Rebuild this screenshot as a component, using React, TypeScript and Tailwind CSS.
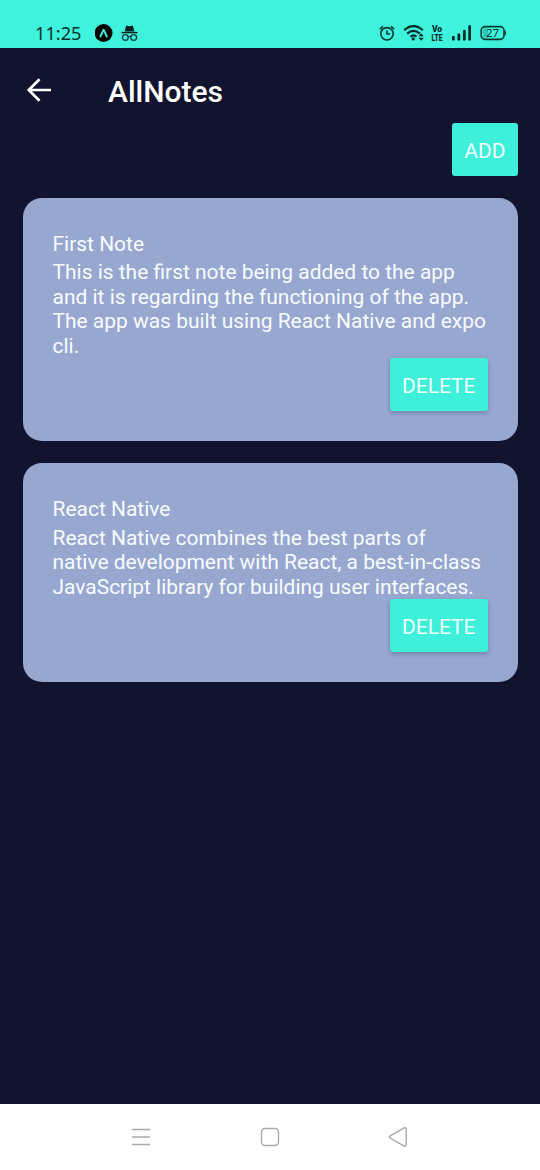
type Note = { title: string; lines: string[] };

const notes: Note[] = [
  {
    title: "First Note",
    lines: [
      "This is the first note being added to the app",
      "and it is regarding the functioning of the app.",
      "The app was built using React Native and expo",
      "cli.",
    ],
  },
  {
    title: "React Native",
    lines: [
      "React Native combines the best parts of",
      "native development with React, a best-in-class",
      "JavaScript library for building user interfaces.",
    ],
  },
];

function StatusBar() {
  return (
    <div className="flex h-12 items-start bg-[#3ef2dc] pt-[23px] pl-[35px] text-[#08302c]">
      <span className="h-5 w-[60px] font-['Noto_Sans',sans-serif] text-[18.2px] leading-5 whitespace-nowrap">11:25</span>
      <svg className="h-5 w-[18px]" viewBox="0 0 18 20">
        <circle cx="8.6" cy="10" r="8.9" fill="#000" />
        <path d="M5.4 13.5 8.6 6.7l3.2 6.8" fill="none" stroke="#3ef2dc" strokeWidth="1.9" strokeLinecap="round" strokeLinejoin="round" />
      </svg>
      <svg className="ml-2 h-5 w-[18px]" viewBox="0 0 18 20">
        <path d="M3.6 8.4 5 3.2Q5.3 2.4 6.2 2.7L8.5 3.3 10.8 2.7Q11.7 2.4 12 3.2L13.4 8.4Z" fill="#0a201e" />
        <path d="M0.5 9.6h16" stroke="#0a201e" strokeWidth="1.4" />
        <g fill="none" stroke="#0a3b36" strokeWidth="1.3">
          <circle cx="4.3" cy="14.5" r="2.9" />
          <circle cx="12.7" cy="14.5" r="2.9" />
          <path d="M7 13.8q1.5-1 3 0" />
        </g>
      </svg>
      <svg className="ml-[240px] h-5 w-[18px]" viewBox="0 0 18 20" fill="none" stroke="#073f39" strokeWidth="1.7">
        <circle cx="8" cy="10.8" r="6.2" />
        <path d="M8 7.5V11h3M.9 6.2 4 3.4M12 3.4l3.1 2.8" />
      </svg>
      <svg className="ml-[6px] h-5 w-[24px]" viewBox="0 0 24 20" fill="none" stroke="#052b27" strokeWidth="2.1">
        <path d="M1.2 7.2Q10.5-.9 19.8 7.2M4.2 10.6Q10.5 5.1 16.8 10.6M7.4 13.7Q10.5 11.1 13.6 13.7" />
        <circle cx="10.2" cy="15.9" r="1.6" fill="#052b27" stroke="none" />
        <path d="m15.6 13.3 2.6-3 2.6 3zM15.6 14.7l2.6 3 2.6-3z" fill="#052b27" stroke="none" />
      </svg>
      <svg className="h-6 w-5 overflow-visible" viewBox="-4 0 20 24" fill="#052b27">
        <text x="6" y="8.8" textAnchor="middle" textLength="10.2" lengthAdjust="spacingAndGlyphs" className="font-['Roboto',sans-serif] text-[9.5px] font-black">Vo</text>
        <text x="6" y="18" textAnchor="middle" textLength="11" lengthAdjust="spacingAndGlyphs" className="font-['Roboto',sans-serif] text-[9.5px] font-black">LTE</text>
      </svg>
      <svg className="ml-[5px] h-5 w-[20px]" viewBox="0 0 20 20" fill="#052b27">
        <rect x="0" y="13" width="2.7" height="4.5" rx=".8" />
        <rect x="5.5" y="10.4" width="2.7" height="7.1" rx=".8" />
        <rect x="11" y="7" width="2.7" height="10.5" rx=".8" />
        <rect x="16.3" y="2.3" width="2.7" height="15.2" rx=".8" />
      </svg>
      <svg className="ml-2 h-5 w-[28px]" viewBox="0 0 28 20">
        <rect x="1.2" y="3.6" width="22.8" height="12.8" rx="3.8" fill="none" stroke="#063a35" strokeWidth="1.6" />
        <rect x="2.9" y="5.3" width="5.2" height="9.4" rx="1.5" fill="#2cc9b7" />
        <path d="M24.6 7.3q1.5.3 1.5 2.7t-1.5 2.7z" fill="#063a35" />
        <text x="12.6" y="14.1" textAnchor="middle" className="fill-[#07302c] font-['Noto_Sans',sans-serif] text-[11.5px]">27</text>
      </svg>
    </div>
  );
}

function ActionButton({ label, raised = false }: { label: string; raised?: boolean }) {
  return (
    <button
      className={`flex h-[52.5px] items-center rounded-[3px] bg-[#3ef0da] px-3 pt-[4px] font-['Roboto',sans-serif] text-[20.96px] leading-none text-[#effffd] ${
        raised ? "shadow-[0_2px_4px_rgba(35,45,85,0.3)]" : ""
      }`}
    >
      {label}
    </button>
  );
}

function NoteCard({ note }: { note: Note }) {
  return (
    <article className="rounded-[19px] bg-[#97a7cf] p-[30px]">
      <h2 className="pt-[3.6px] pb-[3.9px] leading-[25px]">{note.title}</h2>
      <p>
        {note.lines.map((line) => (
          <span key={line} className="block whitespace-nowrap">{line}</span>
        ))}
      </p>
      <div className="flex justify-end">
        <ActionButton label="DELETE" raised />
      </div>
    </article>
  );
}

function NavigationBar() {
  return (
    <nav className="flex h-[66px] items-center bg-white pl-[131px] text-[#aaa]">
      <svg className="h-5 w-5" viewBox="0 0 20 20" fill="none" stroke="currentColor" strokeWidth="1.3">
        <path d="M1 2.5h18M1 10h18M1 17.5h18" />
      </svg>
      <svg className="ml-[109px] h-5 w-5" viewBox="0 0 20 20" fill="none" stroke="currentColor" strokeWidth="1.4">
        <rect x="1.5" y="1.5" width="17" height="17" rx="3.5" />
      </svg>
      <svg className="ml-[108px] h-5 w-5" viewBox="0 0 20 20" fill="none" stroke="currentColor" strokeWidth="1.4" strokeLinejoin="round">
        <path d="M2.2 8.9 16.2.9Q18.2.2 18.2 2v16q0 1.8-2 1.1L2.2 11.1Q.6 10 2.2 8.9Z" />
      </svg>
    </nav>
  );
}

export default function App() {
  return (
    <div className="flex h-[1170px] w-[540px] flex-col overflow-hidden bg-[#12132f] font-['Roboto',sans-serif] text-[20.96px] leading-[24.5px] text-[#f8fcff]">
      <StatusBar />
      <header className="flex h-[75px] items-center pt-[12px] pl-[26px] text-white">
        <svg className="mt-[-3px] h-6 w-[26px]" viewBox="0 0 26 24" fill="none" stroke="currentColor" strokeWidth="2.7">
          <path d="M25 12H3M13.5 1.3 2.8 12l10.7 10.7" />
        </svg>
        <h1 className="ml-14 pt-[1px] text-[30px] font-medium">AllNotes</h1>
      </header>
      <main className="flex flex-1 flex-col px-[22.5px]">
        <div className="flex justify-end">
          <ActionButton label="ADD" />
        </div>
        <div className="mt-[22.5px] flex flex-col gap-[22.5px]">
          {notes.map((note) => (
            <NoteCard key={note.title} note={note} />
          ))}
        </div>
      </main>
      <NavigationBar />
    </div>
  );
}
